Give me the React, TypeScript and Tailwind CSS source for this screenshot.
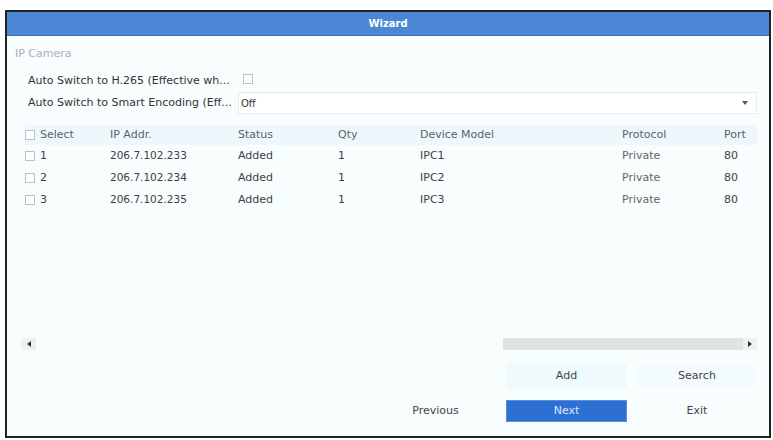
import React from 'react';

const font = { fontFamily: '"DejaVu Sans", Verdana, sans-serif' };

const Check: React.FC = () => (
  <span className="inline-block w-[10px] h-[10px] border border-[#b9c2c8] bg-white shrink-0" />
);

const cols = ['w-[85px]', 'w-[128px]', 'w-[100px]', 'w-[82px]', 'w-[202px]', 'w-[102px]', 'flex-1'];

const rows = [
  { id: '1', ip: '206.7.102.233', model: 'IPC1' },
  { id: '2', ip: '206.7.102.234', model: 'IPC2' },
  { id: '3', ip: '206.7.102.235', model: 'IPC3' },
];

const App: React.FC = () => {
  return (
    <div className="w-[773px] h-[440px] bg-white pt-[10px] pl-[5px] pr-[2px] pb-[2px] text-[11px]" style={font}>
      <div className="h-full border-2 border-[#1e2226] bg-[#f8fdfe] flex flex-col">
        <div className="h-[24px] bg-[#4b87d5] border-b border-[#3b6fb5] flex items-center justify-center text-white text-[10px] font-bold">
          Wizard
        </div>

        <div className="mt-[11px] pl-[8px] h-[14px] leading-[14px] text-[#a9b2b9]">IP Camera</div>

        <div className="mt-[10px] pl-[21px] pr-[12px] flex flex-col text-[#333]">
          <div className="h-[21px] flex items-center">
            <span className="w-[212px] whitespace-nowrap overflow-hidden">Auto Switch to H.265 (Effective wh...</span>
            <span className="ml-[3px]"><Check /></span>
          </div>
          <div className="h-[22px] flex items-center">
            <span className="w-[210px] whitespace-nowrap overflow-hidden">Auto Switch to Smart Encoding (Eff...</span>
            <div className="flex-1 h-full border border-[#e3ecef] bg-white flex items-center justify-between pl-[2px] pr-[8px]">
              <span className="text-[10px]">Off</span>
              <span className="w-0 h-0 border-l-[3px] border-r-[3px] border-t-[4px] border-l-transparent border-r-transparent border-t-[#555]" />
            </div>
          </div>
        </div>

        <div className="mt-[11px] pl-[18px] pr-[12px]">
          <div className="h-[20px] flex items-center bg-[#eef8fc] text-[#5b6369]">
            <div className={`${cols[0]} flex items-center gap-[5px]`}><Check /><span>Select</span></div>
            <div className={cols[1]}>IP Addr.</div>
            <div className={cols[2]}>Status</div>
            <div className={cols[3]}>Qty</div>
            <div className={cols[4]}>Device Model</div>
            <div className={cols[5]}>Protocol</div>
            <div className={`${cols[6]} whitespace-nowrap`}>Port</div>
          </div>
          {rows.map((r) => (
            <div key={r.id} className="h-[22px] flex items-center text-[#3d4246]">
              <div className={`${cols[0]} flex items-center gap-[5px]`}><Check /><span>{r.id}</span></div>
              <div className={`${cols[1]} text-[10.5px]`}>{r.ip}</div>
              <div className={cols[2]}>Added</div>
              <div className={cols[3]}>1</div>
              <div className={cols[4]}>{r.model}</div>
              <div className={`${cols[5]} text-[#666]`}>Private</div>
              <div className={`${cols[6]} whitespace-nowrap`}>80</div>
            </div>
          ))}
        </div>

        <div className="flex-1" />

        <div className="pl-[15px] pr-[12px] h-[12px] flex items-center">
          <div className="w-[14px] h-full bg-[#eef0f1] flex items-center justify-center">
            <span className="w-0 h-0 border-t-[3px] border-b-[3px] border-r-[4px] border-t-transparent border-b-transparent border-r-[#333]" />
          </div>
          <div className="flex-1 h-full flex">
            <div className="w-[467px]" />
            <div className="flex-1 bg-[#e1e3e4]" />
          </div>
          <div className="w-[14px] h-full bg-[#eef0f1] flex items-center justify-center">
            <span className="w-0 h-0 border-t-[3px] border-b-[3px] border-l-[4px] border-t-transparent border-b-transparent border-l-[#333]" />
          </div>
        </div>

        <div className="mt-[13px] pr-[12px] flex justify-end gap-[10px] text-[#444]">
          <div className="w-[121px] h-[26px] bg-[#eefafc] flex items-center justify-center">Add</div>
          <div className="w-[120px] h-[26px] bg-[#f3fbfd] flex items-center justify-center">Search</div>
        </div>

        <div className="mt-[11px] mb-[14px] pr-[12px] flex justify-end gap-[10px] text-[#444]">
          <div className="w-[121px] h-[22px] flex items-center justify-center">Previous</div>
          <div className="w-[121px] h-[22px] bg-[#2d6fd3] border border-[#5a8fe0] text-[#dce8fb] flex items-center justify-center">Next</div>
          <div className="w-[120px] h-[22px] flex items-center justify-center">Exit</div>
        </div>
      </div>
    </div>
  );
};

export default App;
